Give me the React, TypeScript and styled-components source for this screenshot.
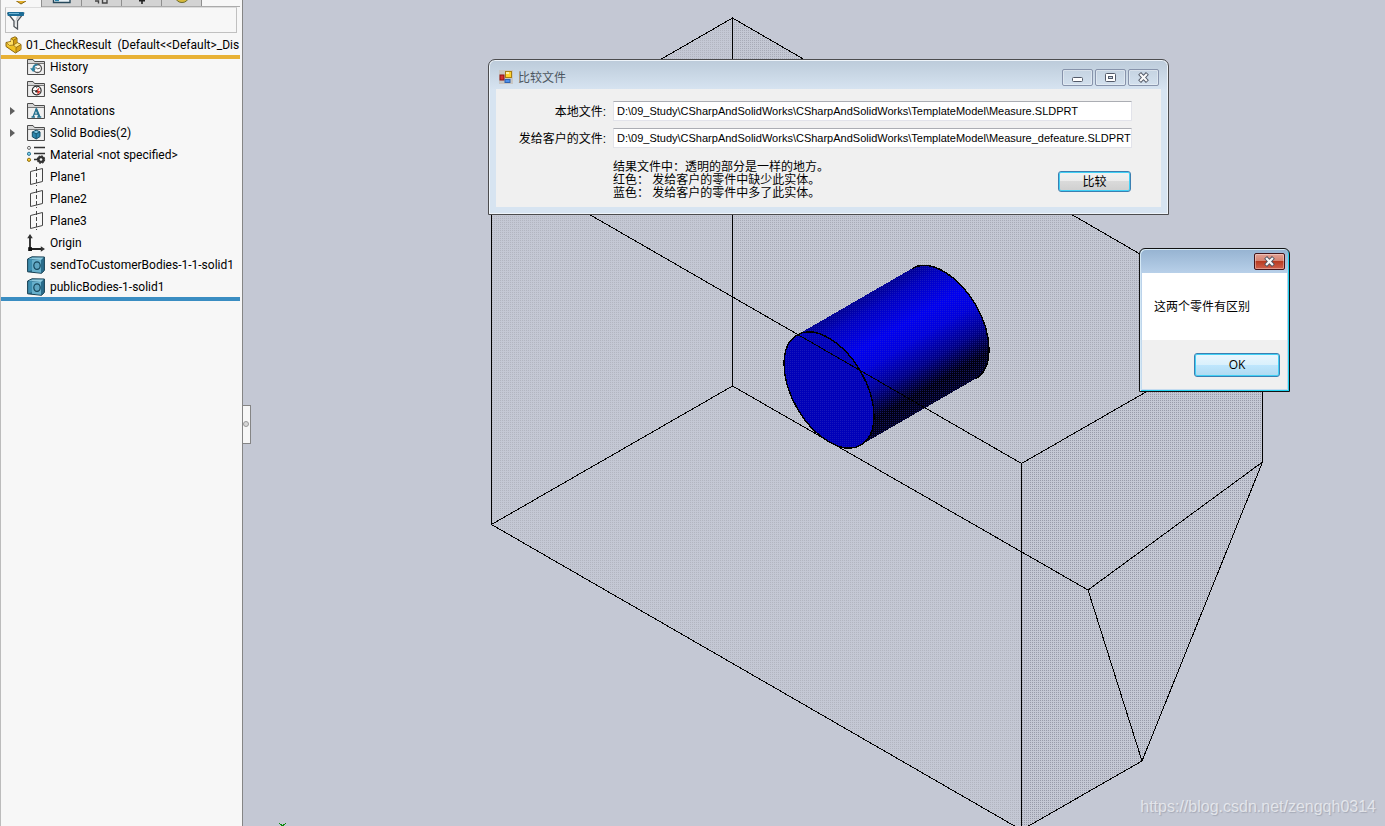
import React from "react";
import styled, { createGlobalStyle, css } from "styled-components";

const uiFont = `Roboto, "Noto Sans CJK SC", sans-serif`;
const formFont = `"Liberation Sans", "Noto Sans CJK SC", sans-serif`;

const GlobalStyle = createGlobalStyle`
  *, *::before, *::after { box-sizing: border-box; }
  body { margin: 0; background: #c4c8d4; overflow: hidden; }
  button, input { font: inherit; color: inherit; margin: 0; padding: 0; }
`;

const Shell = styled.div`
  display: flex;
  height: 100vh;
  font: 12px/16px ${uiFont};
  color: #000;
`;

/* ---------- feature tree ---------- */

const Sidebar = styled.aside`
  flex: none;
  width: 243px;
  padding-right: 2px;
  background: #f7f7f7;
  border-left: 1px solid #bcbcbc;
  border-right: 1px solid #858585;
`;

const TabStrip = styled.div`
  display: flex;
  height: 7px;
  border-bottom: 1px solid #ababab;
`;

const Tab = styled.button<{ $active?: boolean }>`
  width: ${(p) => (p.$active ? 41 : 40)}px;
  height: ${(p) => (p.$active ? 7 : 6)}px;
  border: 0;
  border-right: 1px solid #8f8f8f;
  background: ${(p) => (p.$active ? "#f7f7f7" : "#d3d3d3")};
  overflow: hidden;
  svg { display: block; margin: 0 auto; }
`;

const FilterBox = styled.label`
  display: flex;
  align-items: center;
  height: 26px;
  margin: 0 3px 0 4px;
  padding: 0 1px;
  gap: 4px;
  border: 1px solid #c0c0c0;
  border-top-color: #dcdcdc;
  svg { flex: none; }
`;

const FilterInput = styled.input`
  flex: 1;
  min-width: 0;
  border: 0;
  outline: 0;
  background: transparent;
`;

const PartTitle = styled.div`
  display: flex;
  align-items: center;
  gap: 4px;
  height: 22px;
  padding: 1px 0 0 4px;
  white-space: pre;
  svg { flex: none; }
`;

const Bar = styled.div<{ $color: string }>`
  position: relative;
  z-index: 1;
  height: 4px;
  background: ${(p) => p.$color};
`;

const Tree = styled.ul`
  list-style: none;
  margin: -3px 0 -1px;
  padding: 0;
`;

const TreeRow = styled.li`
  display: grid;
  grid-template-columns: 26px 20px 1fr;
  align-items: center;
  height: 22px;
  white-space: nowrap;
  svg { display: block; }
  span { padding-left: 3px; }
`;

const Expander = styled.button`
  width: 20px;
  height: 16px;
  padding-left: 9px;
  border: 0;
  background: none;
`;

/* ---------- graphics area ---------- */

const Viewport = styled.main`
  position: relative;
  flex: 1;
  min-width: 0;
  overflow: hidden;
  background: #c4c8d4;
`;

const Scene = styled.svg`
  display: block;
`;

const PanelHandle = styled.button`
  display: grid;
  place-content: center start;
  position: absolute;
  left: -1px;
  top: 405px;
  width: 9px;
  height: 39px;
  padding-bottom: 1px;
  border: 1px solid #858585;
  border-left: 0;
  background: #f7f7f7;
  &::after {
    content: "";
    width: 6px;
    height: 6px;
    margin-left: 1px;
    border: 1px solid #999;
    border-radius: 50%;
    background: #d8d8d8;
  }
`;

const Watermark = styled.a`
  position: absolute;
  right: 9px;
  bottom: 9px;
  font: 16px/20px "Liberation Sans", sans-serif;
  color: rgba(255, 255, 255, 0.62);
  text-shadow: 1px 1px 1px rgba(120, 125, 140, 0.4);
  text-decoration: none;
`;

/* ---------- windows ---------- */

const CompareWindow = styled.section`
  position: absolute;
  left: 245px;
  top: 59px;
  width: 681px;
  padding: 0 7px 7px;
  border: 1px solid #4c4c4e;
  border-radius: 7px 7px 0 0;
  box-shadow: inset 0 0 0 1px #eef4fa;
  background: linear-gradient(#bccbda, #d7e4f1 30px);
  font: 12px/16px ${formFont};
`;

const TitleBar = styled.header`
  display: flex;
  align-items: center;
  gap: 5px;
  height: 29px;
  padding: 5px 2px 0 3px;
  color: #4d565f;
`;

const TitleText = styled.h1`
  flex: 1;
  margin: 0;
  padding-top: 2px;
  font: inherit;
`;

const CaptionButtons = styled.div`
  display: flex;
  gap: 2px;
`;

const CaptionButton = styled.button<{ $danger?: boolean }>`
  display: grid;
  place-items: center;
  width: 31px;
  height: 17px;
  border: 1px solid #8793ab;
  border-radius: 2px;
  background: transparent;
  box-shadow: inset 0 0 0 1px rgba(255, 255, 255, 0.35);
  ${(p) =>
    p.$danger &&
    css`
      border-color: #43141a;
      background: linear-gradient(#e3a194, #d4816f 50%, #b83c22 50%, #d0614d);
    `}
`;

const CompareForm = styled.form`
  display: grid;
  grid-template-columns: 110px 519px;
  grid-template-rows: 20px 20px auto;
  column-gap: 7px;
  row-gap: 7px;
  height: 118px;
  padding-top: 12px;
  align-content: start;
  background: #f0f0f0;
`;

const FieldLabel = styled.label`
  text-align: right;
  line-height: 22px;
`;

const PathInput = styled.input`
  height: 20px;
  padding-left: 3px;
  border: 1px solid #e2e3ea;
  border-top-color: #abadb3;
  background: #fff;
  outline: 0;
  font-size: 11px;
`;

const FormFooter = styled.div`
  grid-column: 2;
  display: flex;
  justify-content: space-between;
  align-items: flex-start;
  padding-top: 6px;
`;

const Hint = styled.p`
  margin: 0;
  line-height: 13px;
  white-space: pre;
`;

const PushButton = styled.button<{ $hot?: boolean }>`
  border: 1px solid #3c7fb1;
  border-radius: 3px;
  box-shadow: inset 0 0 0 1px #41d0f5;
  background: linear-gradient(#f2f2f2, #ebebeb 50%, #dadada 50%, #cfcfcf);
  ${(p) =>
    p.$hot &&
    css`
      background: linear-gradient(#eaf6fd, #d9f0fc 50%, #bee6fd 50%, #b0daf0);
    `}
`;

const CompareButton = styled(PushButton)`
  width: 73px;
  height: 21px;
  margin: 10px 1px 0 0;
`;

const MessageWindow = styled.section`
  position: absolute;
  left: 896px;
  top: 248px;
  width: 151px;
  padding: 1px;
  border: 1px solid #111;
  border-radius: 6px 6px 0 0;
  box-shadow: inset 1px 1px 0 #d4e8f5, inset -1px -1px 0 #20d0ee;
  background: linear-gradient(#96b3d1, #b9d1ea 25px, #c4dcf0);
  font-family: "Open Sans", "Noto Sans CJK SC", sans-serif;
`;

const MessageTitle = styled.header`
  display: flex;
  justify-content: flex-end;
  height: 23px;
  padding: 3px 3px 0 0;
`;

const MessageBody = styled.p`
  margin: 0 1px;
  height: 67px;
  padding: 0 12px;
  line-height: 65px;
  background: #fff;
  font-family: "Noto Sans CJK SC", sans-serif;
`;

const MessageActions = styled.footer`
  display: flex;
  justify-content: flex-end;
  height: 49px;
  margin: 0 1px 1px;
  padding: 13px 7px 0 0;
  background: #f0f0f0;
`;

const OkButton = styled(PushButton)`
  width: 86px;
  height: 24px;
`;

/* ---------- icons ---------- */

const FunnelIcon = () => (
  <svg width="18" height="20" viewBox="0 0 18 20">
    <path d="M1 3.5 L7 11 V16.5 L10.5 19 V11 L16.5 3.5 Z" fill="#fafafa" stroke="#4d5358" strokeWidth="1.3" />
    <path d="M9 11 L13 6 L10 6 L8.5 11 V17.5" fill="#bfc4c8" />
    <rect x="0.5" y="2" width="16.5" height="4" rx="0.8" fill="#1c6c96" />
    <rect x="2" y="3" width="10" height="1" fill="#72b6d6" />
  </svg>
);

const PartIcon = () => (
  <svg width="17" height="18" viewBox="0 0 17 18">
    <path d="M6 2.5 L10 .8 L12 2 V6.5 L16 8.5 V13.5 L10.5 17 L1 10.5 V6.5 L6 5.5 Z" fill="#f0c224" stroke="#8a6410" strokeWidth="1" strokeLinejoin="round" />
    <path d="M6 2.8 L8.5 4.2 V9 L4 10.5 L1.5 7 L6 5.8 Z" fill="#ffdf63" />
    <path d="M8.5 4.2 L11.5 2.4 V6.8 L8.5 9 Z" fill="#cf9a12" />
    <path d="M8.5 9 L12 7 L15.5 8.8 L11 11.5 Z" fill="#ffe680" />
    <path d="M11 11.5 L15.5 8.8 V13.3 L11 16 Z" fill="#d9a41a" />
    <path d="M6 2.8 L8.5 4.2 V9 L11 11.5 V16.5 M8.5 4.2 L12 2.2 M8.5 9 L12 6.8 M11 11.5 L16 8.6 M1.5 6.8 L4.5 9.5 L8.5 9" fill="none" stroke="#8a6410" strokeWidth=".8" />
  </svg>
);

const FolderFrame = ({ children }: { children: React.ReactNode }) => (
  <svg width="18" height="18" viewBox="0 0 18 18">
    <path d="M.5 16.5 V1.5 H6 L7.5 3.5 H17.5 V16.5 Z" fill="#d6d6d6" stroke="#4c4c4c" />
    <rect x="1.5" y="6" width="15" height="10" fill="#f0f0f0" />
    <path d="M1 5.5 H17" stroke="#777" />
    {children}
  </svg>
);

const HistoryIcon = () => (
  <FolderFrame>
    <circle cx="10.5" cy="10.5" r="4" fill="#fff" stroke="#555" strokeWidth="1.3" />
    <path d="M8.5 9 L10.5 11 L13 10" fill="none" stroke="#555" />
    <path d="M10.5 6 C7 5.8 5.5 8 5.3 10.2 H3 L6.2 14 L9 10.5 H7.5 C7.6 8.6 8.6 7.4 10.5 7.4 Z" fill="#2d7f9f" />
  </FolderFrame>
);

const SensorsIcon = () => (
  <FolderFrame>
    <circle cx="9.7" cy="10.5" r="4.4" fill="#fff" stroke="#2c2c2c" strokeWidth="1.2" />
    <path d="M10 10.5 L13.3 11 A4 4 0 0 1 10.5 14.2 Z" fill="#e0362c" />
    <path d="M9 12 L12 8.4" stroke="#e0362c" strokeWidth="1.3" />
    <path d="M6.4 10.5 H7.6 M9.7 7.2 V8.2" stroke="#333" />
    <circle cx="9.3" cy="11.2" r="1.2" fill="#333" />
  </FolderFrame>
);

const AnnotationsIcon = () => (
  <FolderFrame>
    <path d="M4.5 15 H8 M10.2 15 H14.2 M6 15 L9.2 6.8 L12.5 15 M7 12.2 H11.4" fill="none" stroke="#24718f" strokeWidth="1.3" />
    <path d="M9.2 6.8 L12.4 14.6" stroke="#24718f" strokeWidth="2" />
  </FolderFrame>
);

const SolidBodiesIcon = () => (
  <FolderFrame>
    <path d="M9.2 6.2 L13 7.9 V12.6 L9.2 15 L5.3 12.8 V8 Z" fill="#2b86ad" stroke="#174e66" />
    <path d="M6.2 8 L9.2 6.8 L12 7.9 L9.2 9.2 Z" fill="#7fc4dd" />
    <path d="M5.3 8 L9.2 9.7 L13 7.9 M9.2 9.7 V15" fill="none" stroke="#174e66" strokeWidth=".8" />
  </FolderFrame>
);

const MaterialIcon = () => (
  <svg width="20" height="18" viewBox="0 0 20 18">
    <path d="M7 1.5 H18 M7 7.5 H18 M7 13.5 H12" stroke="#333" strokeWidth="1.4" />
    <circle cx="2" cy="1.9" r="1.5" fill="#fff" stroke="#666" />
    <circle cx="2" cy="7.8" r="1.6" fill="#7fd0ee" stroke="#2b7390" />
    <circle cx="2" cy="13.8" r="1.6" fill="#ffcf33" stroke="#8c6c10" />
    <circle cx="14" cy="13.5" r="3.6" fill="#333" stroke="#333" strokeWidth="1.2" strokeDasharray="1.8 1" />
    <circle cx="14" cy="13.5" r="1.3" fill="#f7f7f7" />
  </svg>
);

const PlaneIcon = () => (
  <svg width="18" height="20" viewBox="0 0 18 20">
    <path d="M3.5 4.5 L15.5 1.5 V14.5 L3.5 17.5 Z" fill="none" stroke="#454545" strokeWidth="1" />
    <path d="M9.5 0 V19" stroke="#454545" strokeWidth="1" strokeDasharray="4 2" />
  </svg>
);

const OriginIcon = () => (
  <svg width="18" height="18" viewBox="0 0 18 18">
    <path d="M3 3 V15 H15" fill="none" stroke="#222" strokeWidth="1.8" />
    <path d="M3 0 L5.8 4.2 H.2 Z M18 15 L13.8 12.2 V17.8 Z" fill="#333" />
    <rect x="1.2" y="13.2" width="3.8" height="3.8" fill="#111" />
  </svg>
);

const BodyIcon = () => (
  <svg width="18" height="18" viewBox="0 0 18 18">
    <path d="M.6 3 L5 .8 L17.4 1 V14.5 L14.5 17.3 L.6 15.8 Z" fill="#2a6d8c" stroke="#173f52" />
    <path d="M1.6 3.1 L5.2 1.4 L16.6 1.6 L14 3.9 Z" fill="#8ec9de" />
    <path d="M1.3 3.8 L5 2.4 V14 L1.3 15.2 Z" fill="#3f8fb0" />
    <path d="M5 4 H14 V16.7 L5 15.8 Z" fill="#66afcb" />
    <ellipse cx="10" cy="9.6" rx="3.2" ry="3.8" fill="#5fa6c2" stroke="#17475c" strokeWidth="1.2" />
  </svg>
);

const FormIcon = () => (
  <svg width="14" height="14" viewBox="0 0 14 14">
    <rect width="14" height="14" fill="#c9c6c2" />
    <rect x="6.5" y="1.5" width="6" height="6" fill="#ffd42e" stroke="#a87d10" />
    <rect x="1" y="5" width="4" height="5" fill="#d33030" stroke="#8d1010" />
    <rect x="6" y="9.5" width="5" height="3" fill="#4d8fea" stroke="#2e62b0" />
    <rect x="7" y="2" width="3" height="2" fill="#fff1a8" />
  </svg>
);

const CloseGlyph = () => (
  <svg width="13" height="11" viewBox="0 0 13 11">
    <path d="M2.6 1.4 L10.4 9.6 M10.4 1.4 L2.6 9.6" stroke="#4c5361" strokeWidth="4" />
    <path d="M3.1 2 L9.9 9 M9.9 2 L3.1 9" stroke="#f8f8f8" strokeWidth="2.2" />
  </svg>
);

const treeItems: { label: string; icon: React.ReactNode; expandable?: boolean }[] = [
  { label: "History", icon: <HistoryIcon /> },
  { label: "Sensors", icon: <SensorsIcon /> },
  { label: "Annotations", icon: <AnnotationsIcon />, expandable: true },
  { label: "Solid Bodies(2)", icon: <SolidBodiesIcon />, expandable: true },
  { label: "Material <not specified>", icon: <MaterialIcon /> },
  { label: "Plane1", icon: <PlaneIcon /> },
  { label: "Plane2", icon: <PlaneIcon /> },
  { label: "Plane3", icon: <PlaneIcon /> },
  { label: "Origin", icon: <OriginIcon /> },
  { label: "sendToCustomerBodies-1-1-solid1", icon: <BodyIcon /> },
  { label: "publicBodies-1-solid1", icon: <BodyIcon /> },
];

const FeatureTree = () => (
  <Sidebar>
    <TabStrip>
      <Tab $active aria-label="FeatureManager">
        <svg width="12" height="6" viewBox="0 0 12 6">
          <path d="M0 -1 L6 3 L11 0" fill="#e3b02a" stroke="#8a6410" />
        </svg>
      </Tab>
      <Tab aria-label="PropertyManager">
        <svg width="20" height="6" viewBox="0 0 20 6">
          <path d="M1.5 0 V2.5 H18 V0" fill="#e8f1f6" stroke="#26485a" strokeWidth="1.4" />
          <rect x="3" y="0" width="4" height="1.2" fill="#2b86ad" />
        </svg>
      </Tab>
      <Tab aria-label="ConfigurationManager">
        <svg width="20" height="6" viewBox="0 0 20 6">
          <path d="M3 1 H6.5 V3.5 M10.5 0 V3 H15 V0" fill="none" stroke="#444" strokeWidth="1.4" />
        </svg>
      </Tab>
      <Tab aria-label="DimXpertManager">
        <svg width="20" height="6" viewBox="0 0 20 6">
          <path d="M10 0 V4 M7 .6 H13" stroke="#222" strokeWidth="1.6" />
        </svg>
      </Tab>
      <Tab aria-label="DisplayManager">
        <svg width="20" height="6" viewBox="0 0 20 6">
          <ellipse cx="10" cy="-2" rx="6" ry="4.5" fill="#d7b93c" stroke="#6b6b30" />
        </svg>
      </Tab>
    </TabStrip>
    <FilterBox>
      <FunnelIcon />
      <FilterInput aria-label="Filter" />
    </FilterBox>
    <PartTitle>
      <PartIcon />
      {"01_CheckResult  (Default<<Default>_Dis"}
    </PartTitle>
    <Bar $color="#e8b135" />
    <Tree>
      {treeItems.map((item) => (
        <TreeRow key={item.label}>
          {item.expandable ? (
            <Expander aria-label={`Expand ${item.label}`}>
              <svg width="5" height="8" viewBox="0 0 5 8">
                <path d="M0 0 L5 4 L0 8 Z" fill="#5f5f5f" />
              </svg>
            </Expander>
          ) : (
            <i />
          )}
          {item.icon}
          <span>{item.label}</span>
        </TreeRow>
      ))}
    </Tree>
    <Bar $color="#3a8dc2" />
  </Sidebar>
);

const Dots = ({ id, color }: { id: string; color: string }) => (
  <pattern id={id} width="2" height="2" patternUnits="userSpaceOnUse">
    <rect width="1" height="1" fill={color} />
  </pattern>
);

const Model = () => (
  <Scene width="1142" height="826" viewBox="243 0 1142 826" shapeRendering="crispEdges">
    <defs>
      <Dots id="dotsLight" color="#b2b5c0" />
      <Dots id="dotsMid" color="#a8abb7" />
      <Dots id="dotsDark" color="#989ba9" />
      <Dots id="dotsBlue" color="#3838c0" />
      <linearGradient id="tube" gradientUnits="userSpaceOnUse" x1="797" y1="335" x2="861" y2="445">
        <stop offset="0" stopColor="#000090" />
        <stop offset=".12" stopColor="#0000c0" />
        <stop offset=".35" stopColor="#0000f0" />
        <stop offset=".5" stopColor="#0000dc" />
        <stop offset=".7" stopColor="#000088" />
        <stop offset=".88" stopColor="#000010" />
        <stop offset="1" stopColor="#000020" />
      </linearGradient>
    </defs>

    <polygon points="732,18 491,157 491,524 732,386" fill="url(#dotsLight)" />
    <polygon points="491,524 732,386 1021,553 1021,830" fill="url(#dotsLight)" />
    <polygon points="732,18 1262,325 1021,463 1021,553 732,386" fill="url(#dotsMid)" />
    <polygon points="1021,463 1262,325 1262,462 1142,761 1021,830" fill="url(#dotsDark)" />

    <g fill="none" stroke="#000" strokeWidth="1">
      <path d="M732.5 18 L491.5 157 V524.5 L1021.5 830 L1142 761 L1262.5 462 V325 Z" />
      <path d="M732.5 18 V386 L491.5 524.5 M732.5 386 L1088 590 L1262.5 462 M1088 590 L1142 761" />
    </g>

    <path
      d="M797.2 334.9 L912.2 268.4 A63.6 36.7 60 0 1 975.8 378.6 L860.8 445.1 Z"
      fill="url(#tube)"
    />
    <ellipse rx="63.6" ry="36.7" transform="translate(829 390) rotate(60)" fill="#0000b8" />
    <path
      d="M797.2 334.9 L912.2 268.4 A63.6 36.7 60 0 1 975.8 378.6 L860.8 445.1 A63.6 36.7 60 0 1 797.2 334.9 Z"
      fill="url(#dotsBlue)"
      fillOpacity=".4"
    />
    <ellipse rx="63.6" ry="36.7" transform="translate(829 390) rotate(60)" fill="none" stroke="#000" strokeWidth="1.4" />
    <path d="M912.2 268.4 A63.6 36.7 60 0 1 975.8 378.6" fill="none" stroke="#000" strokeWidth="1.4" />

    <path d="M491.5 158 L1021.5 463.5 L1262.5 325 M1021.5 463 V830" fill="none" stroke="#000" />
    <path d="M279 823 L282.5 826 L286 823" fill="none" stroke="#0a8a0a" />
  </Scene>
);

const CompareDialog = () => (
  <CompareWindow aria-label="比较文件">
    <TitleBar>
      <FormIcon />
      <TitleText>比较文件</TitleText>
      <CaptionButtons>
        <CaptionButton aria-label="Minimize">
          <svg width="13" height="11" viewBox="0 0 13 11">
            <rect x="1.5" y="5.5" width="10" height="4" rx="1" fill="#fff" stroke="#535a69" />
          </svg>
        </CaptionButton>
        <CaptionButton aria-label="Maximize">
          <svg width="13" height="11" viewBox="0 0 13 11">
            <rect x="1.5" y="1.5" width="10" height="8" rx="1" fill="#fff" stroke="#535a69" />
            <rect x="4.5" y="4.5" width="4" height="2" fill="#c9d6e4" stroke="#535a69" />
          </svg>
        </CaptionButton>
        <CaptionButton aria-label="Close">
          <CloseGlyph />
        </CaptionButton>
      </CaptionButtons>
    </TitleBar>
    <CompareForm onSubmit={(e) => e.preventDefault()}>
      <FieldLabel htmlFor="local">本地文件:</FieldLabel>
      <PathInput
        id="local"
        defaultValue={"D:\\09_Study\\CSharpAndSolidWorks\\CSharpAndSolidWorks\\TemplateModel\\Measure.SLDPRT"}
      />
      <FieldLabel htmlFor="customer">发给客户的文件:</FieldLabel>
      <PathInput
        id="customer"
        defaultValue={"D:\\09_Study\\CSharpAndSolidWorks\\CSharpAndSolidWorks\\TemplateModel\\Measure_defeature.SLDPRT"}
      />
      <FormFooter>
        <Hint>{"结果文件中：透明的部分是一样的地方。\n红色： 发给客户的零件中缺少此实体。\n蓝色： 发给客户的零件中多了此实体。"}</Hint>
        <CompareButton type="submit">比较</CompareButton>
      </FormFooter>
    </CompareForm>
  </CompareWindow>
);

const MessageBox = () => (
  <MessageWindow role="alertdialog">
    <MessageTitle>
      <CaptionButton $danger aria-label="Close">
        <CloseGlyph />
      </CaptionButton>
    </MessageTitle>
    <MessageBody>这两个零件有区别</MessageBody>
    <MessageActions>
      <OkButton $hot>OK</OkButton>
    </MessageActions>
  </MessageWindow>
);

export default function App() {
  return (
    <>
      <GlobalStyle />
      <Shell>
        <FeatureTree />
        <Viewport>
          <Model />
          <PanelHandle aria-label="Collapse panel" />
          <CompareDialog />
          <MessageBox />
          <Watermark href="#">https://blog.csdn.net/zengqh0314</Watermark>
        </Viewport>
      </Shell>
    </>
  );
}
